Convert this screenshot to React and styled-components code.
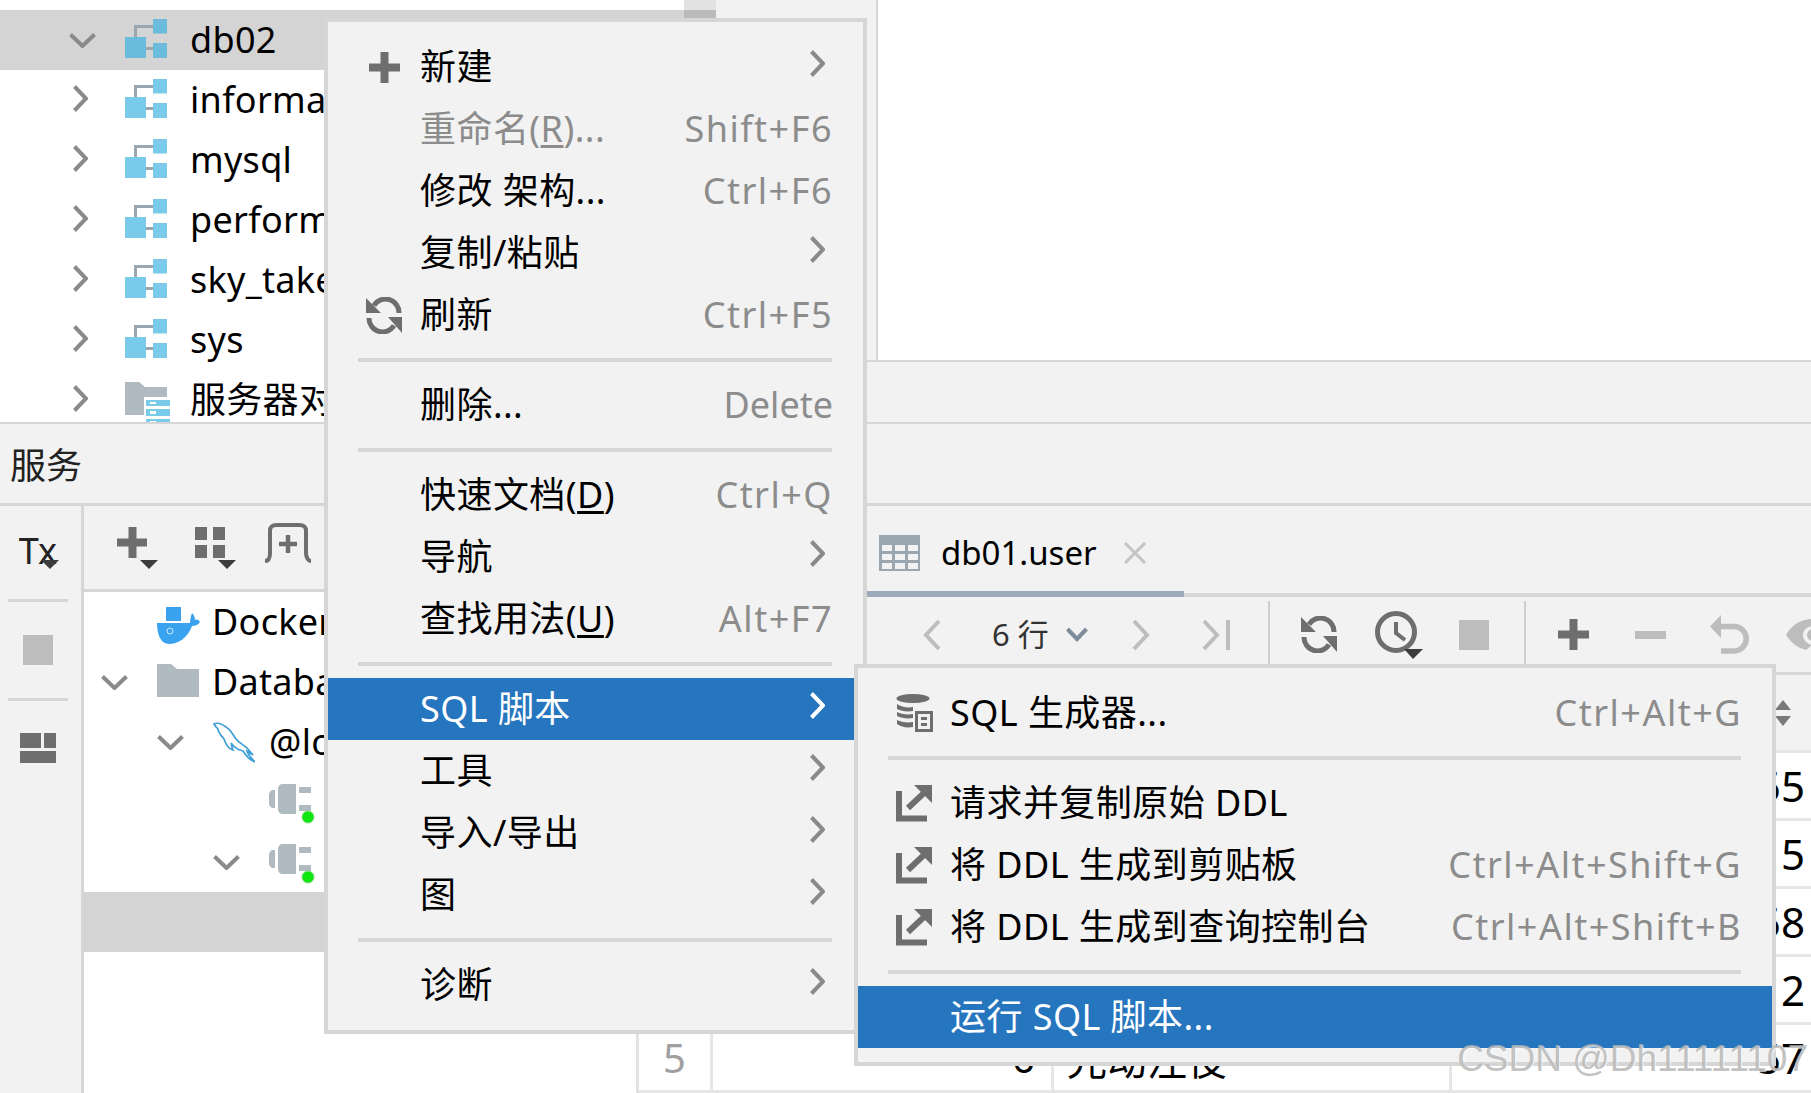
import React from 'react'
import styled, { createGlobalStyle } from 'styled-components'

const Global = createGlobalStyle`
html, body {
  margin: 0;
  padding: 0;
  background: #fff;
  overflow: hidden;
}
* { box-sizing: border-box; }
body {
  font-family: "Noto Sans", "Noto Sans CJK SC", sans-serif;
  font-size: 36px;
  color: #000;
}
`

const GRAY = '#6e6e6e'
const LIGHT = '#bdbdbd'
const LINE = '#d6d6d6'
const BLUE = '#7acaea'
const SLATE = '#afbac1'

const Page = styled.div`
  position: relative;
  width: 1811px;
  height: 1093px;
  overflow: hidden;
  display: flex;
  flex-direction: column;
  white-space: nowrap;
`
const TopBand = styled.div`
  height: 422px;
  display: flex;
  flex-shrink: 0;
`
const DbPane = styled.div`
  position: relative;
  width: 716px;
  overflow: hidden;
  padding-top: 10px;
  background: #fff;
`
const ScrollThumb = styled.div`
  position: absolute;
  top: 0;
  right: 0;
  width: 32px;
  height: 18px;
  background: rgba(0, 0, 0, 0.115);
`
const TopRight = styled.div`
  flex: 1;
  display: flex;
  flex-direction: column;
`
const Upper = styled.div`
  height: 362px;
  display: flex;
  border-bottom: 2px solid ${LINE};
`
const GrayPanel = styled.div`
  width: 162px;
  background: #f2f2f2;
  border-right: 2px solid ${LINE};
`
const Blank = styled.div`
  flex: 1;
  background: #fff;
`
const Strip = styled.div`
  flex: 1;
  background: #f2f2f2;
`
const ServicePane = styled.div`
  flex: 1;
  display: flex;
  flex-direction: column;
  min-height: 0;
  background: #f2f2f2;
`
const ServiceHead = styled.div`
  height: 84px;
  flex-shrink: 0;
  display: flex;
  align-items: center;
  padding-left: 10px;
  color: #222;
  border-top: 2px solid ${LINE};
  border-bottom: 3px solid ${LINE};
`
const ServiceBody = styled.div`
  flex: 1;
  display: flex;
  min-height: 0;
`
const Rail = styled.div`
  width: 84px;
  flex-shrink: 0;
  display: flex;
  flex-direction: column;
  align-items: center;
  padding-right: 5px;
  border-right: 3px solid ${LINE};
`
const RailCell = styled.div`
  height: ${p => p.$h}px;
  width: 100%;
  display: flex;
  align-items: center;
  justify-content: center;
`
const RailSep = styled.div`
  width: 60px;
  height: 3px;
  flex-shrink: 0;
  background: ${LINE};
`
const TxLabel = styled.span`
  position: relative;
  margin-top: -4px;
  color: #222;
  font-size: 36px;
  line-height: 1;
  &::after {
    content: "";
    position: absolute;
    right: -2px;
    bottom: 0;
    border-left: 9px solid transparent;
    border-right: 9px solid transparent;
    border-top: 9px solid #3c3c3c;
  }
`
const StopBox = styled.div`
  width: ${p => p.$size}px;
  height: ${p => p.$size}px;
  flex-shrink: 0;
  background: ${LIGHT};
`
const LayoutIcon = styled.div`
  width: 36px;
  margin-top: -2px;
  display: grid;
  grid-template-columns: 21px 12px;
  grid-template-rows: 15px 12px;
  gap: 3px;
  span {
    background: ${GRAY};
  }
  span:last-child {
    grid-column: 1 / span 2;
    width: 36px;
  }
`
const TreeCol = styled.div`
  width: 552px;
  flex-shrink: 0;
  display: flex;
  flex-direction: column;
  overflow: hidden;
`
const TreeTools = styled.div`
  height: 86px;
  flex-shrink: 0;
  display: flex;
  align-items: center;
  padding-left: 33px;
  border-bottom: 3px solid ${LINE};
`
const TreeBody = styled.div`
  flex: 1;
  background: #fff;
`
const TreeRow = styled.div`
  height: 60px;
  display: flex;
  align-items: center;
  padding-left: ${p => p.$indent}px;
  background: ${p => (p.$selected ? '#d4d4d4' : 'transparent')};
`
const ChevronSlot = styled.div`
  width: 56px;
  flex-shrink: 0;
  display: flex;
  padding-left: ${p => p.$pad || 0}px;
  margin-bottom: ${p => (p.$pad ? 3 : 0)}px;
`
const IconSlot = styled.div`
  width: ${p => p.$w}px;
  flex-shrink: 0;
  display: flex;
  align-items: center;
  margin-top: ${p => (p.$shift || 0) * 2}px;
`
const RowText = styled.span`
  line-height: 1;
  letter-spacing: 0.3px;
`
const Results = styled.div`
  flex: 1;
  min-width: 0;
  display: flex;
  flex-direction: column;
  border-left: 3px solid #e2e2e2;
`
const TabBar = styled.div`
  height: 91px;
  flex-shrink: 0;
  display: flex;
  align-items: stretch;
  padding-left: 227px;
  border-bottom: 4px solid ${LINE};
`
const Tab = styled.div`
  width: 318px;
  margin-bottom: -4px;
  padding: 8px 0 0 13px;
  display: flex;
  align-items: center;
  gap: 21px;
  border-bottom: 6px solid #9eaabc;
`
const TabTitle = styled.span`
  font-size: 33px;
  line-height: 1;
`
const CloseMark = styled.span`
  display: flex;
  margin-left: 5px;
`
const Toolbar = styled.div`
  height: 78px;
  flex-shrink: 0;
  display: flex;
  align-items: center;
  padding-left: 201px;
  border-bottom: 3px solid ${LINE};
`
const Tool = styled.div`
  flex-shrink: 0;
  display: flex;
  margin-left: ${p => p.$gap || 0}px;
  margin-bottom: ${p => p.$rise || 0}px;
`
const ToolSep = styled.div`
  width: 2px;
  height: 68px;
  flex-shrink: 0;
  margin-left: ${p => p.$gap}px;
  background: #cfcfcf;
`
const RowsLabel = styled.span`
  margin-left: 50px;
  font-size: 31px;
  color: #333;
  line-height: 1;
`
const TableHead = styled.div`
  height: 78px;
  flex-shrink: 0;
  display: flex;
  align-items: center;
  justify-content: flex-end;
  padding-right: 20px;
  border-bottom: 3px solid #e6e6e6;
`
const TableBody = styled.div`
  flex: 1;
  background: #fff;
`
const DataRow = styled.div`
  height: 68px;
  display: grid;
  grid-template-columns: 74px 341px 398px 1fr;
  border-bottom: 3px solid #e6e6e6;
`
const DataCell = styled.div`
  display: flex;
  align-items: center;
  overflow: hidden;
  font-size: ${p => p.$size || 40}px;
  line-height: 1;
  justify-content: ${p => p.$align || 'flex-start'};
  padding: ${p => p.$pad || '0'};
  color: ${p => p.$color || '#000'};
  border-right: ${p => (p.$last ? 'none' : '3px solid #e6e6e6')};
`
const Menu = styled.div`
  position: absolute;
  left: ${p => p.$left}px;
  top: ${p => p.$top}px;
  width: ${p => p.$width}px;
  padding: 14px 0;
  background: #f2f2f2;
  border: 4px solid ${LINE};
`
const Item = styled.div`
  height: 62px;
  display: flex;
  align-items: center;
  padding: 0 30px 0 38px;
  background: ${p => (p.$active ? '#2675bf' : 'transparent')};
  color: ${p => (p.$active ? '#fff' : p.$disabled ? '#8c8c8c' : '#000')};
`
const ItemIcon = styled.div`
  width: 37px;
  margin-right: 17px;
  flex-shrink: 0;
  display: flex;
  justify-content: center;
`
const ItemLabel = styled.span`
  flex: 1;
  line-height: 1;
  letter-spacing: 0.45px;
`
const Shortcut = styled.span`
  color: #8c8c8c;
  letter-spacing: ${p => p.$spacing}px;
  line-height: 1;
`
const Arrow = styled.span`
  display: flex;
  margin: 0 8px 7px 0;
`
const Mn = styled.u`
  text-underline-offset: 3px;
`
const MenuSep = styled.div`
  height: 4px;
  margin: 12px 31px 12px 30px;
  background: ${LINE};
`
const Watermark = styled.div`
  position: absolute;
  right: 3px;
  bottom: 16px;
  font-family: "Liberation Sans", sans-serif;
  font-size: 37px;
  line-height: 1;
  color: rgba(178, 178, 178, 0.8);
  text-shadow: 1px 1px 1px rgba(255, 255, 255, 0.8);
`

const ChevronRight = ({ color = '#8a8a8a' }) => (
  <svg width="15" height="27" viewBox="0 0 15 27" fill="none" stroke={color} strokeWidth="4">
    <path d="M1.5 1.5 L13 13.5 L1.5 25.5" />
  </svg>
)
const ChevronDown = () => (
  <svg width="27" height="15" viewBox="0 0 27 15" fill="none" stroke="#8a8a8a" strokeWidth="4">
    <path d="M1.5 1.5 L13.5 13 L25.5 1.5" />
  </svg>
)
const SchemaIcon = ({ dark }) => {
  const c = dark ? '#6bbcdc' : BLUE
  return (
    <svg width="42" height="39" viewBox="0 0 42 39">
      <path d="M9 18 V6 H28 V9 H12 V18 Z M21 28 H28 V31 H21 Z" fill="#9aa7b0" />
      <rect x="28" y="0" width="14" height="14.5" fill={c} />
      <rect x="0" y="18" width="21" height="21" fill={c} />
      <rect x="28" y="24" width="14" height="15" fill={c} />
    </svg>
  )
}
const ServerFolderIcon = () => (
  <svg width="45" height="60" viewBox="0 0 45 60">
    <path d="M0 12 H14 L20 17 H42 V45 H0 Z" fill={SLATE} />
    <rect x="19" y="27" width="26" height="33" fill="#fff" />
    <rect x="21" y="30" width="24" height="6" fill={BLUE} />
    <rect x="21" y="39" width="24" height="7" fill={BLUE} />
    <rect x="21" y="49" width="24" height="7" fill={BLUE} />
    <rect x="25" y="32" width="6" height="2" fill="#fff" />
    <rect x="25" y="41" width="6" height="3" fill="#fff" />
    <rect x="25" y="51" width="6" height="3" fill="#fff" />
  </svg>
)
const FolderIcon = () => (
  <svg width="42" height="33" viewBox="0 0 42 33">
    <path d="M0 0 H14 L20 5 H42 V33 H0 Z" fill={SLATE} />
  </svg>
)
const DockerIcon = () => (
  <svg width="43" height="37" viewBox="0 0 43 37">
    <rect x="9" y="0" width="15" height="14" fill="#3aa3f0" />
    <path d="M0 16 H33 C33 12 34 9 35 6 C37 8 38 10 38 13 C40 12 42 13 43 15 C41 18 38 19 35 19 C31 30 22 37 12 37 C4 37 0 28 0 16 Z" fill="#3aa3f0" />
    <circle cx="13" cy="24" r="3" fill="none" stroke="#cfe8fb" strokeWidth="1" />
  </svg>
)
const DolphinIcon = () => (
  <svg width="42" height="41" viewBox="0 0 42 41" fill="none" stroke="#3f9fd6" strokeWidth="1.7">
    <path d="M1 2 C5 0 9 2 13 5 C18 8 20 13 23 17 C26 21 31 23 34 26 C36 28 38 31 40 33 L34 29 C35 33 38 36 42 40 C37 38 33 34 30 29 C25 28 21 25 18 21 C19 24 19 26 20 28 C16 27 13 23 11 17 C9 14 5 11 5 7 C4 6 2 4 1 2 Z" />
  </svg>
)
const PlugIcon = () => (
  <svg width="46" height="42" viewBox="0 0 46 42">
    <path d="M6 6 V24 H3 C1 23 0 21 0 19 V11 C0 9 1 7 3 6 Z" fill={SLATE} />
    <path d="M14 0 H27 V30 H14 C11 30 9 28 9 25 V5 C9 2 11 0 14 0 Z" fill={SLATE} />
    <rect x="30" y="3" width="12" height="6" fill={SLATE} />
    <rect x="30" y="21" width="12" height="6" fill={SLATE} />
    <circle cx="39" cy="33" r="6" fill="#0fe60f" stroke="#86d986" strokeWidth="1" />
  </svg>
)
const PlusIcon = ({ color = GRAY }) => (
  <svg width="31" height="31" viewBox="0 0 31 31" fill={color}>
    <rect x="0" y="11.5" width="31" height="8" />
    <rect x="11.5" y="0" width="8" height="31" />
  </svg>
)
const PlusCaret = () => (
  <svg width="41" height="42" viewBox="0 0 41 42">
    <path d="M0 11.5 H11.5 V0 H19.5 V11.5 H30 V19.5 H19.5 V31 H11.5 V19.5 H0 Z" fill={GRAY} />
    <path d="M23 33 H41 L32 42 Z" fill="#3c3c3c" />
  </svg>
)
const GridCaret = () => (
  <svg width="41" height="42" viewBox="0 0 41 42">
    <rect x="0" y="0" width="12" height="13" fill={GRAY} />
    <rect x="18" y="0" width="12" height="13" fill={GRAY} />
    <rect x="0" y="18" width="12" height="13" fill={GRAY} />
    <rect x="18" y="18" width="12" height="13" fill={GRAY} />
    <path d="M23 33 H41 L32 42 Z" fill="#3c3c3c" />
  </svg>
)
const NewTabIcon = () => (
  <svg width="48" height="40" viewBox="0 0 48 40" fill="none" stroke={GRAY}>
    <path strokeWidth="4" d="M1 38 C5 38 6 34 6 30 V8 C6 3 9 2 13 2 H35 C39 2 42 3 42 8 V30 C42 34 44 38 47 38" />
    <path strokeWidth="4.5" d="M15 21 H33 M24 12 V30" />
  </svg>
)
const RefreshIcon = () => (
  <svg width="37" height="37" viewBox="0 0 37 37">
    <g fill="none" stroke={GRAY} strokeWidth="5">
      <path d="M8 8.5 A 13.5 13.5 0 0 1 33 16" />
      <path d="M3 21 A 13.5 13.5 0 0 0 28 28.5" />
    </g>
    <path d="M0 1 V16 H15 Z M36 36 V20 H22 Z" fill={GRAY} />
  </svg>
)
const ClockIcon = () => (
  <svg width="48" height="48" viewBox="0 0 48 48">
    <circle cx="21" cy="21" r="18.5" fill="none" stroke={GRAY} strokeWidth="5" />
    <path d="M21 11 V22 L30 29" fill="none" stroke={GRAY} strokeWidth="4" />
    <path d="M29 38 H48 L38 48 Z" fill="#3c3c3c" />
  </svg>
)
const UndoIcon = () => (
  <svg width="40" height="39" viewBox="0 0 40 39">
    <path d="M0 11.5 L11 0 V23 Z" fill={LIGHT} />
    <path d="M10 11.5 H24 A 12 12 0 0 1 24 36 H11" fill="none" stroke={LIGHT} strokeWidth="5.5" />
  </svg>
)
const EyeIcon = () => (
  <svg width="40" height="34" viewBox="0 0 40 34">
    <path d="M0 17 C5 8 14 1 26 1 V8 C20 9 17 13 17 17 C17 22 21 26 26 27 L20 32 C12 30 5 25 0 17 Z" fill={LIGHT} />
    <circle cx="27" cy="17" r="6" fill={LIGHT} />
  </svg>
)
const NavIcon = ({ dir, bar }) => (
  <svg width={bar ? 30 : 20} height="32" viewBox={bar ? '0 0 30 32' : '0 0 20 32'} fill="none" stroke={LIGHT} strokeWidth="4">
    {dir === 'left' ? (
      <path d={bar ? 'M22 2 L9 16 L22 30' : 'M17 2 L4 16 L17 30'} />
    ) : (
      <path d="M3 2 L16 16 L3 30" />
    )}
    {bar && <path d={dir === 'left' ? 'M2 1 V31' : 'M27 1 V31'} />}
  </svg>
)
const SmallChevron = () => (
  <svg width="22" height="15" viewBox="0 0 22 15" fill="none" stroke="#7f8c9b" strokeWidth="4">
    <path d="M1.5 2 L11 12 L20.5 2" />
  </svg>
)
const TableIcon = () => (
  <svg width="41" height="36" viewBox="0 0 41 36">
    <rect width="41" height="36" fill="#9aa7b0" />
    {[10, 19, 28].map(y =>
      [3, 16, 29].map(x => <rect key={`${x}-${y}`} x={x} y={y} width="10" height="6" fill="#f2f2f2" />)
    )}
  </svg>
)
const CloseIcon = () => (
  <svg width="24" height="22" viewBox="0 0 24 22" stroke="#c4c4c4" strokeWidth="3">
    <path d="M2 1 L22 21 M22 1 L2 21" />
  </svg>
)
const SortIcon = () => (
  <svg width="16" height="26" viewBox="0 0 16 26" fill="#7a7a7a">
    <path d="M8 0 L16 10 H0 Z M0 16 H16 L8 26 Z" />
  </svg>
)
const GeneratorIcon = () => (
  <svg width="37" height="38" viewBox="0 0 37 38">
    <g fill={GRAY}>
      <ellipse cx="17" cy="4.5" rx="16.5" ry="4.5" />
      <path d="M1 10 C5 13 12 14 17 13 V17 C11 18 5 17 1 15 Z M1 18 C5 20 11 21 17 20 V24 C11 25 5 24 1 22 Z M1 26 C5 28 11 29 17 28 V33 C11 34 5 33 1 30 Z" />
    </g>
    <path d="M19 17 H37 V38 H19 Z M22 20 V35 H34 V20 Z" fill={GRAY} fillRule="evenodd" />
    <rect x="25" y="23" width="6" height="3" fill={GRAY} />
    <rect x="25" y="29" width="6" height="3" fill={GRAY} />
  </svg>
)
const JumpIcon = () => (
  <svg width="37" height="37" viewBox="0 0 37 37">
    <path d="M3 6 V33.5 H31" fill="none" stroke={GRAY} strokeWidth="6" />
    <path d="M12 23 L29 7" fill="none" stroke={GRAY} strokeWidth="6" />
    <path d="M18 0 H36 V18 Z" fill={GRAY} />
  </svg>
)

const schemas = ['information_schema', 'mysql', 'performance_schema', 'sky_take_out', 'sys']

const rows = [
  { n: 1, value: '55' },
  { n: 2, value: '15' },
  { n: 3, value: '58' },
  { n: 4, value: '12' },
  { n: 5, id: 6, name: '光动注役', value: '57' },
]

const mainMenu = [
  { label: '新建', icon: <PlusIcon />, sub: true },
  { label: <>重命名(<Mn>R</Mn>)...</>, key: 'Shift+F6', disabled: true },
  { label: '修改 架构...', key: 'Ctrl+F6' },
  { label: '复制/粘贴', sub: true },
  { label: '刷新', icon: <RefreshIcon />, key: 'Ctrl+F5' },
  'sep',
  { label: '删除...', key: 'Delete', spacing: 0 },
  'sep',
  { label: <>快速文档(<Mn>D</Mn>)</>, key: 'Ctrl+Q' },
  { label: '导航', sub: true },
  { label: <>查找用法(<Mn>U</Mn>)</>, key: 'Alt+F7' },
  'sep',
  { label: 'SQL 脚本', sub: true, active: true },
  { label: '工具', sub: true },
  { label: '导入/导出', sub: true },
  { label: '图', sub: true },
  'sep',
  { label: '诊断', sub: true },
]

const sqlMenu = [
  { label: 'SQL 生成器...', icon: <GeneratorIcon />, key: 'Ctrl+Alt+G' },
  'sep',
  { label: '请求并复制原始 DDL', icon: <JumpIcon /> },
  { label: '将 DDL 生成到剪贴板', icon: <JumpIcon />, key: 'Ctrl+Alt+Shift+G' },
  { label: '将 DDL 生成到查询控制台', icon: <JumpIcon />, key: 'Ctrl+Alt+Shift+B' },
  'sep',
  { label: '运行 SQL 脚本...', active: true },
]

const MenuList = ({ items, ...rest }) => (
  <Menu {...rest}>
    {items.map((it, i) =>
      it === 'sep' ? (
        <MenuSep key={i} />
      ) : (
        <Item key={i} $active={it.active} $disabled={it.disabled}>
          <ItemIcon>{it.icon}</ItemIcon>
          <ItemLabel>{it.label}</ItemLabel>
          {it.key && <Shortcut $spacing={it.spacing ?? 1.5}>{it.key}</Shortcut>}
          {it.sub && (
            <Arrow>
              <ChevronRight color={it.active ? '#fff' : '#8a8a8a'} />
            </Arrow>
          )}
        </Item>
      )
    )}
  </Menu>
)

export default function App() {
  return (
    <Page>
      <Global />
      <TopBand>
        <DbPane>
          <ScrollThumb />
          <TreeRow $indent={69} $selected>
            <ChevronSlot><ChevronDown /></ChevronSlot>
            <IconSlot $w={65} $shift={-1.5}><SchemaIcon dark /></IconSlot>
            <RowText>db02</RowText>
          </TreeRow>
          {schemas.map(name => (
            <TreeRow $indent={69} key={name}>
              <ChevronSlot $pad={4}><ChevronRight /></ChevronSlot>
              <IconSlot $w={65} $shift={-1.5}><SchemaIcon /></IconSlot>
              <RowText>{name}</RowText>
            </TreeRow>
          ))}
          <TreeRow $indent={69}>
            <ChevronSlot $pad={4}><ChevronRight /></ChevronSlot>
            <IconSlot $w={65}><ServerFolderIcon /></IconSlot>
            <RowText>服务器对象</RowText>
          </TreeRow>
        </DbPane>
        <TopRight>
          <Upper>
            <GrayPanel />
            <Blank />
          </Upper>
          <Strip />
        </TopRight>
      </TopBand>

      <ServicePane>
        <ServiceHead>服务</ServiceHead>
        <ServiceBody>
          <Rail>
            <RailCell $h={93}><TxLabel>Tx</TxLabel></RailCell>
            <RailSep />
            <RailCell $h={96}><StopBox $size={30} /></RailCell>
            <RailSep />
            <RailCell $h={96}>
              <LayoutIcon><span /><span /><span /></LayoutIcon>
            </RailCell>
          </Rail>
          <TreeCol>
            <TreeTools>
              <Tool><PlusCaret /></Tool>
              <Tool $gap={37}><GridCaret /></Tool>
              <Tool $gap={28} $rise={9}><NewTabIcon /></Tool>
            </TreeTools>
            <TreeBody>
              <TreeRow $indent={17}>
                <ChevronSlot />
                <IconSlot $w={55} $shift={3}><DockerIcon /></IconSlot>
                <RowText>Docker</RowText>
              </TreeRow>
              <TreeRow $indent={17}>
                <ChevronSlot><ChevronDown /></ChevronSlot>
                <IconSlot $w={55} $shift={-2}><FolderIcon /></IconSlot>
                <RowText>Database</RowText>
              </TreeRow>
              <TreeRow $indent={73}>
                <ChevronSlot><ChevronDown /></ChevronSlot>
                <IconSlot $w={56}><DolphinIcon /></IconSlot>
                <RowText>@localhost</RowText>
              </TreeRow>
              <TreeRow $indent={129}>
                <ChevronSlot />
                <IconSlot $w={57} $shift={3}><PlugIcon /></IconSlot>
              </TreeRow>
              <TreeRow $indent={129}>
                <ChevronSlot><ChevronDown /></ChevronSlot>
                <IconSlot $w={57} $shift={3}><PlugIcon /></IconSlot>
              </TreeRow>
              <TreeRow $indent={0} $selected />
            </TreeBody>
          </TreeCol>
          <Results>
            <TabBar>
              <Tab>
                <TableIcon />
                <TabTitle>db01.user</TabTitle>
                <CloseMark><CloseIcon /></CloseMark>
              </Tab>
            </TabBar>
            <Toolbar>
              <Tool><NavIcon dir="left" bar /></Tool>
              <Tool $gap={52}><NavIcon dir="left" /></Tool>
              <RowsLabel>6 行</RowsLabel>
              <Tool $gap={17}><SmallChevron /></Tool>
              <Tool $gap={43}><NavIcon dir="right" /></Tool>
              <Tool $gap={50}><NavIcon dir="right" bar /></Tool>
              <ToolSep $gap={37} />
              <Tool $gap={31}><RefreshIcon /></Tool>
              <Tool $gap={37}><ClockIcon /></Tool>
              <Tool $gap={36}><StopBox $size={30} /></Tool>
              <ToolSep $gap={35} />
              <Tool $gap={32}><PlusIcon /></Tool>
              <Tool $gap={46}>
                <svg width="31" height="8" viewBox="0 0 31 8"><rect width="31" height="8" fill={LIGHT} /></svg>
              </Tool>
              <Tool $gap={44}><UndoIcon /></Tool>
              <Tool $gap={36}><EyeIcon /></Tool>
            </Toolbar>
            <TableHead><SortIcon /></TableHead>
            <TableBody>
              {rows.map(r => (
                <DataRow key={r.n}>
                  <DataCell $align="center" $color="#a0a0a0">{r.n}</DataCell>
                  <DataCell $align="flex-end" $pad="0 16px 0 0">{r.id}</DataCell>
                  <DataCell $pad="4px 0 0 13px">{r.name}</DataCell>
                  <DataCell $align="flex-end" $pad="0 6px 0 0" $size={42} $last>{r.value}</DataCell>
                </DataRow>
              ))}
            </TableBody>
          </Results>
        </ServiceBody>
      </ServicePane>

      <MenuList items={mainMenu} $left={324} $top={18} $width={543} />
      <MenuList items={sqlMenu} $left={854} $top={664} $width={922} />
      <Watermark>CSDN @Dh11111107</Watermark>
    </Page>
  )
}
